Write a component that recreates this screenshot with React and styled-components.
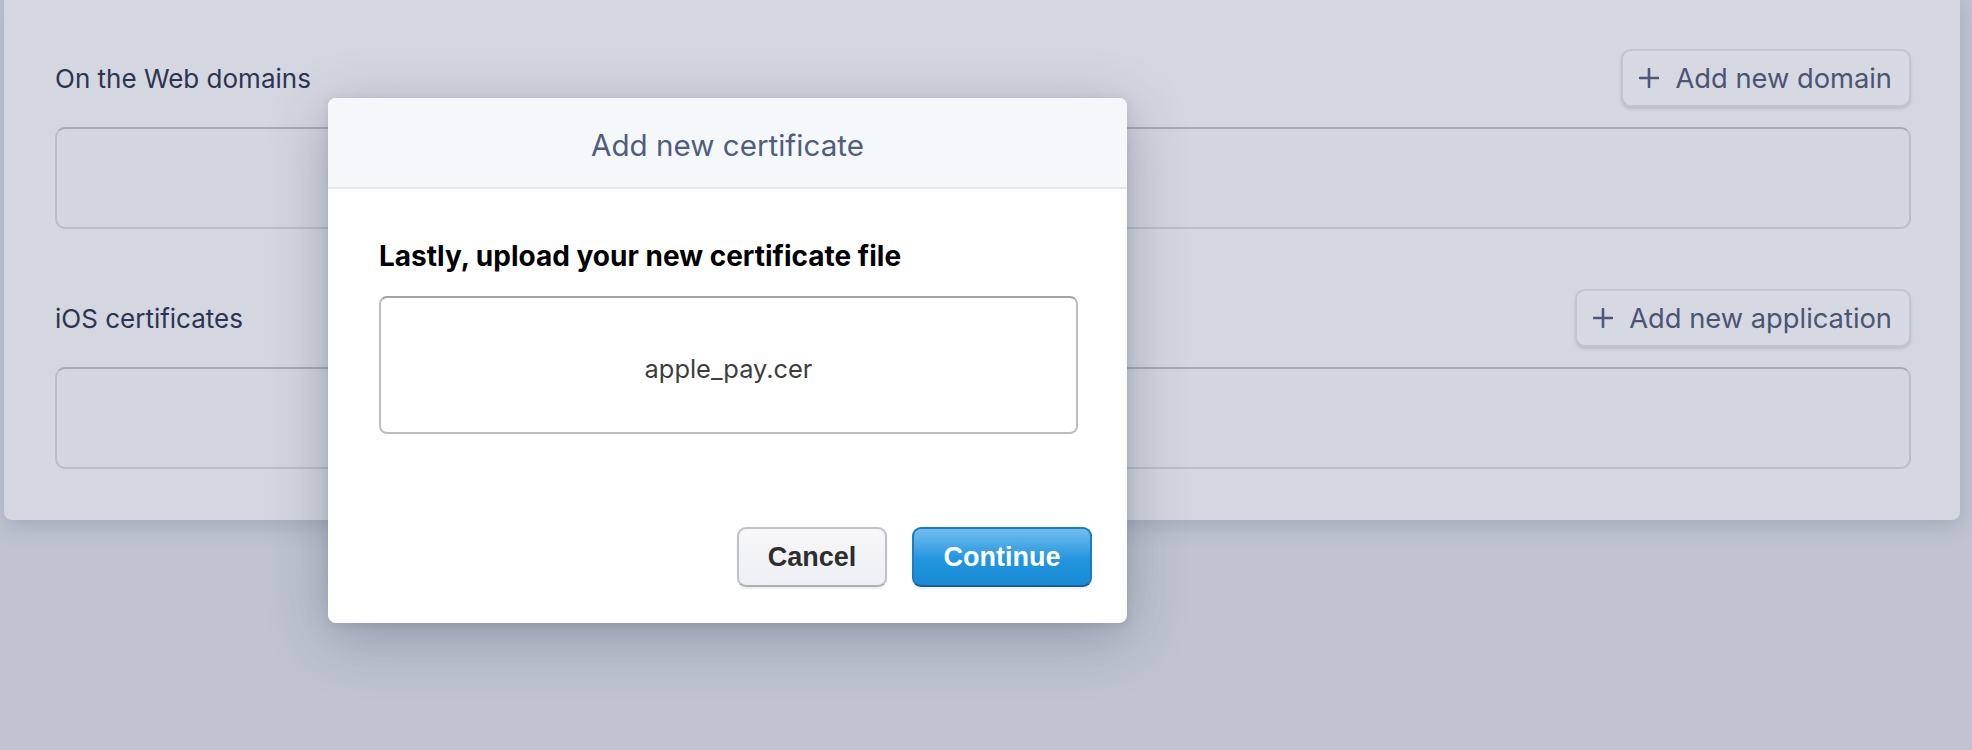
import React from 'react'
import styled, { createGlobalStyle } from 'styled-components'

const GlobalStyle = createGlobalStyle`
  html, body {
    margin: 0;
    padding: 0;
    background: #bfc4d0;
    font-family: Inter, "Liberation Sans", sans-serif;
    -webkit-font-smoothing: antialiased;
  }
`

const PlusIcon = () => (
  <svg width="20" height="20" viewBox="0 0 20 20">
    <path d="M10 1v18M1 10h18" stroke="#4e5977" strokeWidth="2.6" strokeLinecap="round" />
  </svg>
)

const App = () => {
  const sections = [
    { label: 'On the Web domains', action: 'Add new domain' },
    { label: 'iOS certificates', action: 'Add new application' }
  ]
  return (
    <Page>
      <GlobalStyle />
      <Card>
        {sections.map(s => (
          <Section key={s.label}>
            <SectionRow>
              <SectionLabel>{s.label}</SectionLabel>
              <AddButton>
                <PlusIcon />
                {s.action}
              </AddButton>
            </SectionRow>
            <EmptyBox />
          </Section>
        ))}
      </Card>
      <Modal>
        <ModalHeader>Add new certificate</ModalHeader>
        <ModalBody>
          <StepTitle>Lastly, upload your new certificate file</StepTitle>
          <FileDrop>apple_pay.cer</FileDrop>
        </ModalBody>
        <ModalFooter>
          <FooterButton>Cancel</FooterButton>
          <FooterButton primary>Continue</FooterButton>
        </ModalFooter>
      </Modal>
    </Page>
  )
}

const Page = styled.div`
  position: relative;
  min-height: 750px;
  padding: 0 12px 0 4px;
  box-sizing: border-box;
  overflow: hidden;
`

const Card = styled.div`
  margin-top: -6px;
  background: #d4d7e0;
  border-radius: 8px;
  padding: 55px 49px 51px 51px;
  display: flex;
  flex-direction: column;
  gap: 60px;
  box-shadow: 0 6px 22px rgba(70, 80, 110, 0.22);
`

const Section = styled.div`
  display: flex;
  flex-direction: column;
  gap: 20px;
`

const SectionRow = styled.div`
  display: flex;
  align-items: center;
  justify-content: space-between;
  height: 58px;
`

const SectionLabel = styled.div`
  font-size: 26px;
  color: #2c3550;
`

const AddButton = styled.button`
  display: flex;
  align-items: center;
  gap: 16px;
  height: 58px;
  box-sizing: border-box;
  padding: 0 17px 0 16px;
  background: #d6d9e2;
  border: 2px solid #c2c5ce;
  border-radius: 10px;
  box-shadow: 0 2px 3px rgba(60, 70, 95, 0.18);
  font-family: inherit;
  font-size: 27.3px;
  color: #4b5572;
`

const EmptyBox = styled.div`
  height: 102px;
  box-sizing: border-box;
  border: 2px solid #babec8;
  border-top-color: #a6aab5;
  border-radius: 10px;
  background: #d3d6df;
`

const Modal = styled.div`
  position: absolute;
  left: 328px;
  top: 98px;
  width: 799px;
  height: 525px;
  background: #ffffff;
  border-radius: 8px;
  overflow: hidden;
  display: flex;
  flex-direction: column;
  box-shadow: 0 14px 60px rgba(45, 55, 85, 0.32), 0 2px 8px rgba(45, 55, 85, 0.12);
`

const ModalHeader = styled.div`
  height: 91px;
  box-sizing: border-box;
  padding-top: 5px;
  background: #f5f8fb;
  border-bottom: 2px solid #e3e8ee;
  display: flex;
  align-items: center;
  justify-content: center;
  font-size: 29.6px;
  color: #505d7c;
`

const ModalBody = styled.div`
  padding: 50px 49px 0 51px;
`

const StepTitle = styled.div`
  font-size: 28px;
  font-weight: 700;
  color: #000000;
`

const FileDrop = styled.div`
  margin-top: 23px;
  height: 138px;
  box-sizing: border-box;
  padding-top: 6px;
  border: 2px solid #bdbdbd;
  border-top-color: #a3a3a3;
  border-radius: 8px;
  display: flex;
  align-items: center;
  justify-content: center;
  font-size: 25.4px;
  color: #3d3d3d;
`

const ModalFooter = styled.div`
  margin-top: auto;
  padding: 0 35px 36px 0;
  display: flex;
  justify-content: flex-end;
  gap: 25px;
`

const FooterButton = styled.button`
  height: 60px;
  width: ${props => (props.primary ? '180px' : '150px')};
  box-sizing: border-box;
  border-radius: 9px;
  font-family: "Liberation Sans", Inter, sans-serif;
  font-size: 27px;
  font-weight: 700;
  color: ${props => (props.primary ? '#ffffff' : '#2e2e2e')};
  border: 2px solid ${props => (props.primary ? '#1a7cc4' : '#bfc1c8')};
  border-bottom-color: ${props => (props.primary ? '#10609e' : '#aeb0b8')};
  background: ${props =>
    props.primary
      ? 'linear-gradient(#72bdee, #2195de 55%, #1a8bd6)'
      : 'linear-gradient(#f7f7f9, #eeeff3)'};
  box-shadow: 0 2px 2px rgba(0, 0, 0, 0.08);
`

export default App
